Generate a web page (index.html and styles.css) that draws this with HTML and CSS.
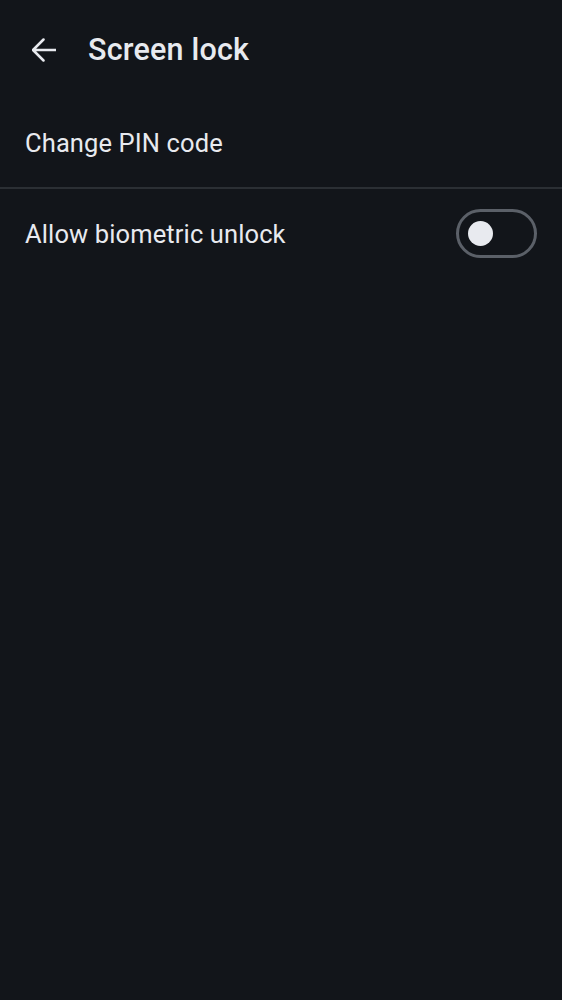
FILE: index.html
```html
<!DOCTYPE html>
<html>
<head>
<meta charset="utf-8">
<link rel="stylesheet" href="styles.css">
</head>
<body>
<div class="app">
  <header class="topbar">
    <button class="back" aria-label="Back">
      <svg width="24" height="24" viewBox="0 0 24 24"><path d="M11.5 1.5L1 12l10.5 10.5M1 12h22.5" fill="none" stroke="#e8eaef" stroke-width="2.5" stroke-linecap="round" stroke-linejoin="round"/></svg>
    </button>
    <h1 class="title">Screen lock</h1>
  </header>
  <div class="row">
    <span class="label">Change PIN code</span>
  </div>
  <div class="divider"></div>
  <div class="row">
    <span class="label">Allow biometric unlock</span>
    <span class="switch"><span class="thumb"></span></span>
  </div>
</div>
</body>
</html>
```
FILE: styles.css
```css
html, body {
  margin: 0;
  padding: 0;
  background: #12151a;
}
body {
  font-family: Roboto, "Noto Sans", sans-serif;
  color: #e8eaef;
  height: 1000px;
}
.app {
  display: flex;
  flex-direction: column;
}
.topbar {
  height: 98px;
  display: flex;
  align-items: center;
  padding-left: 32px;
  gap: 32px;
}
.back {
  background: none;
  border: none;
  padding: 0;
  width: 24px;
  height: 24px;
  display: flex;
  margin-top: 2px;
}
.title {
  margin: 0;
  font-size: 30.5px;
  font-weight: 500;
  letter-spacing: 0.2px;
}
.row {
  height: 89px;
  display: flex;
  align-items: center;
  justify-content: space-between;
  padding: 0 25px;
}
.label {
  font-size: 25.5px;
  font-weight: 400;
  letter-spacing: 0.12px;
}
.divider {
  height: 2px;
  background: #2b2f34;
}
.switch {
  box-sizing: border-box;
  width: 81px;
  height: 49px;
  border: 3px solid #5b6068;
  border-radius: 25px;
  display: flex;
  align-items: center;
  padding-left: 9px;
}
.thumb {
  width: 25px;
  height: 25px;
  border-radius: 50%;
  background: #e8eaef;
}
```
